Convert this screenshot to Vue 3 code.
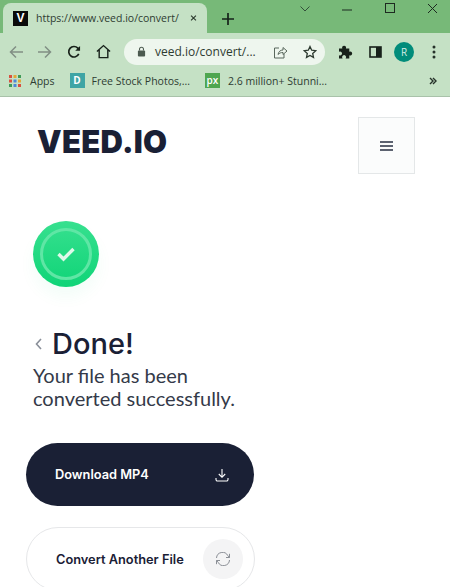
<template>
  <div class="screen">
    <header class="browser">
      <div class="tabstrip">
        <div class="tab">
          <span class="favicon">V</span>
          <span class="tab-title">https://www.veed.io/convert/</span>
          <svg class="tab-close" width="10" height="10" viewBox="0 0 10 10">
            <path d="M1.5 1.5l7 7M8.5 1.5l-7 7" stroke="#2b3a2d" stroke-width="1.6" fill="none" />
          </svg>
        </div>
        <svg class="new-tab" width="14" height="14" viewBox="0 0 14 14">
          <path d="M7 1v12M1 7h12" stroke="#16221a" stroke-width="1.7" fill="none" />
        </svg>
        <div class="window-controls">
          <svg width="12" height="8" viewBox="0 0 12 8">
            <path d="M1.5 1.5L6 6l4.5-4.5" stroke="#33503a" stroke-width="1" fill="none" />
          </svg>
          <svg class="win-min" width="11" height="10" viewBox="0 0 11 10">
            <path d="M0 5h10" stroke="#1d2a20" stroke-width="1" fill="none" />
          </svg>
          <svg class="win-max" width="10" height="10" viewBox="0 0 10 10">
            <rect x="0.5" y="0.5" width="9" height="9" stroke="#1d2a20" fill="none" />
          </svg>
          <svg class="win-close" width="11" height="11" viewBox="0 0 11 11">
            <path d="M1 1l9 9M10 1l-9 9" stroke="#1d2a20" stroke-width="1" fill="none" />
          </svg>
        </div>
      </div>
      <div class="toolbar">
        <svg class="nav" width="14" height="14" viewBox="0 0 14 14">
          <path d="M14 7H1.500M7 1.500L1.500 7 7 12.500" stroke="#818f84" stroke-width="1.500" fill="none" />
        </svg>
        <svg class="nav" width="14" height="14" viewBox="0 0 14 14">
          <path d="M0 7h12.500M7 1.500L12.500 7 7 12.500" stroke="#818f84" stroke-width="1.500" fill="none" />
        </svg>
        <svg class="nav" width="14" height="14" viewBox="0 0 15 15">
          <path d="M12.6 9.500A5.600 5.600 0 1 1 11.600 3.400L13 5" stroke="#17211a" stroke-width="1.800" fill="none" />
          <path d="M14 1v5.200H8.800z" fill="#17211a" />
        </svg>
        <svg class="nav home" width="15" height="15" viewBox="0 0 16 15">
          <path d="M1 7.600L8 1.200l7 6.400M3.400 6v8h9.200V6" stroke="#17211a" stroke-width="1.500" fill="none" />
        </svg>
        <div class="omnibox">
          <svg width="9" height="11" viewBox="0 0 10 12">
            <path d="M2.800 5V3.400a2.200 2.200 0 0 1 4.400 0V5" stroke="#4c5a50" stroke-width="1.200" fill="none" />
            <rect x="1" y="5" width="8" height="6.500" rx="1" fill="#4c5a50" />
          </svg>
          <span class="url">veed.io/convert/...</span>
          <svg class="share" width="15" height="14" viewBox="0 0 15 14">
            <path d="M6 3H1.500v10h9.500V9M5 9.500C5.500 6.500 7.500 5 10 5V2.500L14 6l-4 3.500V7.500C8 7.500 6.300 8 5 9.500z" stroke="#59675c" stroke-width="1" fill="none" />
          </svg>
          <svg class="star" width="14" height="14" viewBox="0 0 14 14">
            <path d="M7 1.500l1.700 3.700 4 .5-3 2.700.8 4L7 10.400l-3.500 2 .8-4-3-2.700 4-.5z" stroke="#2d3a30" stroke-width="1.300" fill="none" />
          </svg>
        </div>
        <svg class="puzzle" width="15" height="15" viewBox="0 0 15 15">
          <path d="M1 4.500h3.300a2 2 0 1 1 3.600 0h3.400v3.200a2 2 0 1 1 0 3.600V14.500H7.600a2 2 0 1 0-3 0H1v-3.300a2 2 0 1 0 0-3.400z" fill="#17211a" />
        </svg>
        <svg class="sidebar" width="13" height="12" viewBox="0 0 13 12">
          <rect x="1" y="1" width="11" height="10" stroke="#17211a" stroke-width="1.600" fill="none" />
          <rect x="7" y="1" width="5" height="10" fill="#17211a" />
        </svg>
        <span class="avatar">R</span>
        <svg class="menu-dots" width="4" height="14" viewBox="0 0 4 14">
          <circle cx="2" cy="2" r="1.500" fill="#26322a" />
          <circle cx="2" cy="7" r="1.500" fill="#26322a" />
          <circle cx="2" cy="12" r="1.500" fill="#26322a" />
        </svg>
      </div>
      <div class="bookmarks">
        <svg class="apps" width="12" height="12" viewBox="0 0 12 12">
          <rect v-for="cell in appCells" :key="cell.key" :x="cell.x" :y="cell.y" width="3" height="3" :fill="cell.fill" />
        </svg>
        <span class="bm-label apps-label">Apps</span>
        <span class="bm-icon pik">D</span>
        <span class="bm-label stock-label">Free Stock Photos,...</span>
        <span class="bm-icon px">px</span>
        <span class="bm-label">2.6 million+ Stunni...</span>
        <svg class="more" width="8" height="8" viewBox="0 0 8 8">
          <path d="M1 1l3 3-3 3M4 1l3 3-3 3" stroke="#26322a" stroke-width="1.400" fill="none" />
        </svg>
      </div>
    </header>

    <main class="page">
      <div class="site-nav">
        <span class="logo">VEED.IO</span>
        <button class="burger" aria-label="Menu">
          <span></span><span></span><span></span>
        </button>
      </div>

      <div class="badge">
        <div class="badge-ring">
          <svg width="20" height="16" viewBox="0 0 20 16">
            <path d="M2.500 8l5 5L17.500 3" stroke="#dff8ea" stroke-width="3.400" fill="none" />
          </svg>
        </div>
      </div>

      <div class="title-row">
        <svg width="7" height="12" viewBox="0 0 7 12">
          <path d="M6 1L1.500 6 6 11" stroke="#8a8f99" stroke-width="1.600" fill="none" />
        </svg>
        <h1>Done!</h1>
      </div>
      <p class="subtitle">Your file has been<br />converted successfully.</p>

      <button class="btn btn-dark">
        <span>Download MP4</span>
        <svg width="16" height="16" viewBox="0 0 16 16">
          <path d="M8 2v8M4.800 7L8 10.300 11.200 7M2 11v1.500a1.500 1.500 0 0 0 1.500 1.500h9a1.500 1.500 0 0 0 1.500-1.500V11" stroke="#fff" stroke-width="1.100" fill="none" />
        </svg>
      </button>

      <button class="btn btn-light">
        <span>Convert Another File</span>
        <span class="refresh">
          <svg width="16" height="14" viewBox="0 0 16 14">
            <path d="M1.500 6A6 6 0 0 1 12.800 3.600L14.500 5.500M14.500 8A6 6 0 0 1 3.200 10.400L1.500 8.500" stroke="#8b8f96" stroke-width="1" fill="none" />
            <path d="M14.500 1.800v3.700h-3.500M1.500 12.200V8.500h3.500" stroke="#8b8f96" stroke-width="1" fill="none" />
          </svg>
        </span>
      </button>
    </main>
  </div>
</template>

<script setup>
const appColors = ['#d9503f', '#e0a83a', '#3f9a57', '#d9503f', '#4f87d6', '#e0a83a', '#3f9a57', '#4f87d6', '#d9503f']
const appCells = appColors.map((fill, i) => ({
  key: i,
  fill,
  x: (i % 3) * 4.5,
  y: Math.floor(i / 3) * 4.5,
}))
</script>

<style>
body {
  background: #fff;
}
</style>

<style scoped>
.screen {
  width: 450px;
  height: 587px;
  overflow: hidden;
  background: #fff;
  font-family: "Open Sans", sans-serif;
}
.browser {
  background: #c5e1c5;
  border-bottom: 1px solid #a9c2aa;
  height: 97px;
  box-sizing: border-box;
}
.tabstrip {
  height: 33px;
  background: #77b978;
  display: flex;
  padding-top: 3px;
  box-sizing: border-box;
}
.tab {
  width: 204px;
  margin-left: 3px;
  background: #c5e1c5;
  border-radius: 8px 8px 0 0;
  display: flex;
  align-items: center;
  padding: 0 10px;
  box-sizing: border-box;
}
.favicon {
  width: 15px;
  height: 15px;
  background: #0a0a0a;
  color: #fff;
  font: 700 12px/15px "Liberation Sans", sans-serif;
  text-align: center;
  flex: none;
}
.tab-title {
  margin-left: 8px;
  font-size: 10.5px;
  color: #2e3c32;
  white-space: nowrap;
  width: 145px;
  flex: none;
}
.tab-close {
  margin-left: 9px;
}
.new-tab {
  margin: 9px 0 0 14px;
}
.window-controls {
  display: flex;
  align-items: flex-start;
  margin-left: auto;
  margin-right: 12px;
}
.window-controls svg {
  margin-top: 2px;
}
.win-min {
  margin-left: 31px;
}
.win-max {
  margin-left: 32px;
  margin-top: 0 !important;
}
.win-close {
  margin-left: 32px;
  margin-top: 0 !important;
}
.toolbar {
  height: 34px;
  display: flex;
  align-items: center;
  padding: 3px 0 0 9px;
  box-sizing: border-box;
}
.nav {
  margin-right: 15px;
  flex: none;
}
.home {
  margin-right: 13px;
}
.omnibox {
  width: 201px;
  height: 26px;
  border-radius: 13px;
  background: #eef6ee;
  display: flex;
  align-items: center;
  padding-left: 13px;
  box-sizing: border-box;
  flex: none;
}
.url {
  margin-left: 9px;
  font-size: 12px;
  color: #2e3c32;
  white-space: nowrap;
  width: 104px;
}
.share {
  margin-left: 14px;
}
.star {
  margin-left: 15px;
}
.puzzle {
  margin-left: 13px;
  flex: none;
}
.sidebar {
  margin-left: 16px;
  flex: none;
}
.avatar {
  width: 20px;
  height: 20px;
  border-radius: 50%;
  background: #018c7a;
  color: #d6ece6;
  font-size: 10px;
  line-height: 20px;
  text-align: center;
  margin-left: 12px;
  flex: none;
}
.menu-dots {
  margin-left: 18px;
  flex: none;
}
.bookmarks {
  height: 29px;
  display: flex;
  align-items: center;
  padding-left: 9px;
  padding-bottom: 2px;
  box-sizing: border-box;
}
.bm-label {
  font-size: 10.5px;
  color: #2e3c32;
  white-space: nowrap;
}
.apps-label {
  margin-left: 9px;
}
.bm-icon {
  width: 15px;
  height: 15px;
  flex: none;
  text-align: center;
  color: #fff;
  font-size: 10px;
  line-height: 15px;
}
.pik {
  background: #3fa5a5;
  margin: 0 7px 0 15px;
  font-weight: 700;
}
.px {
  background: #4fa650;
  margin: 0 8px 0 15px;
  font-weight: 600;
}
.more {
  margin-left: auto;
  margin-right: 13px;
}
.page {
  color: #1a2035;
  font-family: Inter, sans-serif;
}
.site-nav {
  display: flex;
  justify-content: space-between;
  align-items: flex-start;
  padding: 20px 35px 0 37px;
}
.logo {
  font: 900 31px/36px Inter, sans-serif;
  letter-spacing: 0.3px;
  margin-top: 7px;
}
.burger {
  width: 57px;
  height: 57px;
  background: #fbfcfc;
  border: 1px solid #e4e7e8;
  padding: 0;
  display: flex;
  flex-direction: column;
  align-items: center;
  justify-content: center;
  gap: 2px;
}
.burger span {
  width: 13px;
  height: 2px;
  background: #5c6270;
}
.badge {
  width: 66px;
  height: 66px;
  margin: 47px 0 0 33px;
  border-radius: 50%;
  background: linear-gradient(#37e08f, #0fd477);
  box-shadow: 0 10px 16px rgba(16, 208, 119, 0.05);
  display: flex;
  align-items: center;
  justify-content: center;
}
.badge-ring {
  width: 46px;
  height: 46px;
  border: 3px solid #5fe6a5;
  border-radius: 50%;
  display: flex;
  align-items: center;
  justify-content: center;
}
.title-row {
  display: flex;
  align-items: center;
  gap: 10px;
  margin: 38px 0 0 35px;
}
h1 {
  margin: 0;
  font-size: 29px;
  line-height: 38px;
  font-weight: 500;
}
.subtitle {
  margin: 1px 0 0 33px;
  font-family: Lato, sans-serif;
  font-size: 20px;
  line-height: 23px;
  color: #343a49;
}
.btn {
  display: flex;
  align-items: center;
  justify-content: space-between;
  margin-left: 26px;
  box-sizing: border-box;
  font: 600 12.800px Inter, sans-serif;
  padding: 0;
}
.btn-dark {
  margin-top: 33px;
  width: 228px;
  height: 63px;
  border: none;
  border-radius: 32px;
  background: #1a2035;
  color: #fff;
  padding: 0 24px 0 29px;
}
.btn-light {
  margin-top: 21px;
  width: 229px;
  height: 64px;
  border: 1px solid #e6e7e9;
  border-radius: 32px;
  background: #fff;
  color: #1a2035;
  padding: 0 11px 0 29px;
}
.refresh {
  width: 40px;
  height: 40px;
  border-radius: 50%;
  background: #f4f4f5;
  display: flex;
  align-items: center;
  justify-content: center;
}
</style>
